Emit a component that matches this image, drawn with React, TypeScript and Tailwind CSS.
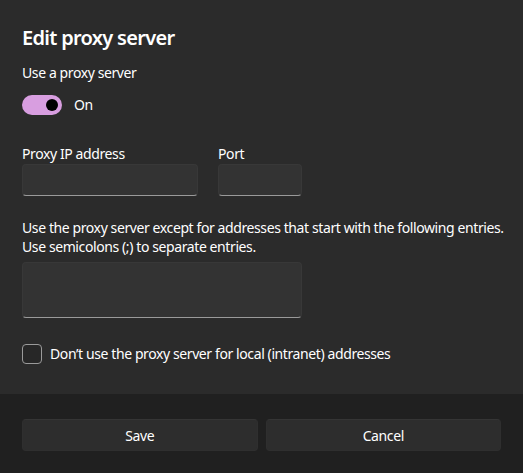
import { useState } from "react";

const font = { fontFamily: '"Segoe UI", "Noto Sans", sans-serif' };

const TextBox = ({ className }: { className: string }) => (
  <div
    className={`rounded-[4px] border border-[#383838] border-b-[#9a9a9a] bg-[#333333] ${className}`}
  />
);

const App = () => {
  const [useProxy, setUseProxy] = useState(true);
  const [skipLocal, setSkipLocal] = useState(false);

  return (
    <div
      className="flex h-[473px] w-[523px] flex-col bg-[#2b2b2b] text-[14px] tracking-[-0.4px] text-white antialiased"
      style={font}
    >
      <div className="flex flex-1 flex-col px-[22px] pt-[24px]">
        <h1 className="text-[20px] font-semibold leading-7 tracking-[-0.7px]">Edit proxy server</h1>

        <p className="mt-[11px] leading-5">Use a proxy server</p>

        <button
          className="mt-[12px] flex items-center gap-3 self-start"
          onClick={() => setUseProxy(!useProxy)}
        >
          <span
            className={`flex h-5 w-10 items-center rounded-full px-[4px] ${
              useProxy ? "justify-end bg-[#d89ee0]" : "justify-start border border-[#9a9a9a]"
            }`}
          >
            <span
              className={`h-3 w-3 rounded-full ${useProxy ? "bg-black" : "bg-[#cfcfcf]"}`}
            />
          </span>
          <span className="leading-5">{useProxy ? "On" : "Off"}</span>
        </button>

        <div className="mt-[29px] flex gap-5">
          <div className="flex flex-col">
            <label className="leading-5">Proxy IP address</label>
            <TextBox className="h-8 w-[176px]" />
          </div>
          <div className="flex flex-col">
            <label className="leading-5">Port</label>
            <TextBox className="h-8 w-[84px]" />
          </div>
        </div>

        <p className="mt-[22px] leading-[19px]">
          <span className="block whitespace-nowrap">
            Use the proxy server except for addresses that start with the following entries.
          </span>
          <span className="block whitespace-nowrap">Use semicolons (;) to separate entries.</span>
        </p>

        <TextBox className="mt-[6px] h-14 w-[280px]" />

        <label className="mt-[26px] flex cursor-pointer items-center gap-2 self-start">
          <span
            className="h-5 w-5 rounded-[4px] border border-[#9a9a9a] bg-[#272727]"
            onClick={() => setSkipLocal(!skipLocal)}
          >
            {skipLocal && (
              <svg viewBox="0 0 20 20" className="h-full w-full">
                <path d="M5 10.5l3.2 3L15 6.5" fill="none" stroke="white" strokeWidth="1.4" />
              </svg>
            )}
          </span>
          <span className="leading-5">
            Don’t use the proxy server for local (intranet) addresses
          </span>
        </label>
      </div>

      <div className="flex h-[79px] gap-2 bg-[#202020] px-[22px] pt-[25px]">
        <button className="h-8 flex-1 rounded-[4px] border border-[#2f2f2f] border-t-[#353535] bg-[#2d2d2d]">
          Save
        </button>
        <button className="h-8 flex-1 rounded-[4px] border border-[#2f2f2f] border-t-[#353535] bg-[#2d2d2d]">
          Cancel
        </button>
      </div>
    </div>
  );
};

export default App;
